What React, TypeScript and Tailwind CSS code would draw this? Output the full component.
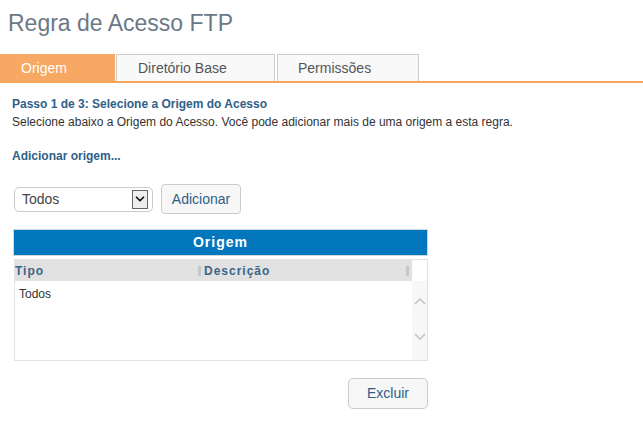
import { ChevronDown } from "lucide-react";

const font = { fontFamily: '"Liberation Sans", Arial, sans-serif' };

const tabs = ["Origem", "Diretório Base", "Permissões"];

const Chevron = ({ up }: { up?: boolean }) => (
  <svg width="12" height="7" viewBox="0 0 12 7" fill="none">
    <polyline
      points={up ? "1,6 6,1 11,6" : "1,1 6,6 11,1"}
      stroke="#c4c4c4"
      strokeWidth="1.6"
    />
  </svg>
);

const App = () => {
  return (
    <div className="w-[643px] h-[421px] bg-white overflow-hidden" style={font}>
      {/* Title */}
      <h1 className="pl-[8px] pt-[9px] text-[23px] leading-[28px] text-[#6b7886]">
        Regra de Acesso FTP
      </h1>

      {/* Tabs */}
      <div className="mt-[17px] flex items-end border-b-2 border-[#f5a55c]">
        {tabs.map((tab, i) => (
          <div
            key={tab}
            className={
              i === 0
                ? "w-[115px] h-[27px] mr-[1px] pl-[20px] flex items-center text-[14px] text-white bg-[#f7a862] border border-b-0 border-[#f7a862]"
                : i === 1
                ? "w-[159px] h-[27px] mr-[2px] pl-[21px] flex items-center text-[14px] text-[#555] bg-[#f9f9f9] border border-b-0 border-[#cccccc]"
                : "w-[142px] h-[27px] pl-[20px] flex items-center text-[14px] text-[#555] bg-[#f9f9f9] border border-b-0 border-[#cccccc]"
            }
          >
            {tab}
          </div>
        ))}
      </div>

      {/* Step info */}
      <div className="pl-[12px] pt-[13px]">
        <p className="text-[12px] leading-[16px] font-bold text-[#2e6089]">
          Passo 1 de 3: Selecione a Origem do Acesso
        </p>
        <p className="text-[12px] leading-[16px] mt-[2px] text-[#333]">
          Selecione abaixo a Origem do Acesso. Você pode adicionar mais de uma origem a esta regra.
        </p>
        <p className="text-[12px] leading-[16px] mt-[18px] font-bold text-[#2e6089]">
          Adicionar origem...
        </p>
      </div>

      {/* Select + Adicionar */}
      <div className="mt-[20px] pl-[14px] flex items-center gap-[8px]">
        <div className="w-[139px] h-[25px] border border-[#cccccc] rounded-[5px] flex items-center justify-between pl-[7px] pr-[4px]">
          <span className="text-[14px] text-[#444]">Todos</span>
          <span className="w-[16px] h-[19px] border border-[#666] bg-[#eeeeee] flex items-center justify-center">
            <ChevronDown size={14} strokeWidth={3} className="text-[#111]" />
          </span>
        </div>
        <button className="w-[80px] h-[30px] border border-[#cccccc] rounded-[4px] bg-[#f7f7f7] text-[14px] text-[#2e6089]">
          Adicionar
        </button>
      </div>

      {/* Table */}
      <div className="mt-[15px] ml-[13px] w-[415px]">
        <div className="h-[27px] bg-[#0277bd] border border-[#cfd8dc] flex items-center justify-center text-[14px] font-bold text-white tracking-[1px]">
          Origem
        </div>
        <div className="mt-[3px] ml-[1px] h-[102px] border border-[#e2e2e2] flex">
          <div className="flex-1 flex flex-col">
            <div className="h-[21px] bg-[#e1e1e1] flex items-center text-[12px] font-bold text-[#3a6587] tracking-[1px]">
              <div className="w-[183px]">Tipo</div>
              <div className="w-[3px] h-[10px] bg-[#c2c8cc] mr-[3px]" />
              <div className="flex-1">Descrição</div>
              <div className="w-[3px] h-[10px] bg-[#c2c8cc] mr-[3px]" />
            </div>
            <div className="pl-[4px] pt-[4px] text-[12px] text-[#333]">Todos</div>
          </div>
          <div className="w-[15px] flex flex-col">
            <div className="h-[21px] bg-white" />
            <div className="flex-1 bg-[#f7f7f7] flex flex-col items-center pt-[17px] gap-[28px]">
              <Chevron up />
              <Chevron />
            </div>
          </div>
        </div>
      </div>

      {/* Excluir */}
      <div className="w-[428px] flex justify-end mt-[17px]">
        <button className="w-[80px] h-[31px] border border-[#cccccc] rounded-[5px] bg-[#f7f7f7] text-[14px] text-[#2e6089]">
          Excluir
        </button>
      </div>
    </div>
  );
};

export default App;
